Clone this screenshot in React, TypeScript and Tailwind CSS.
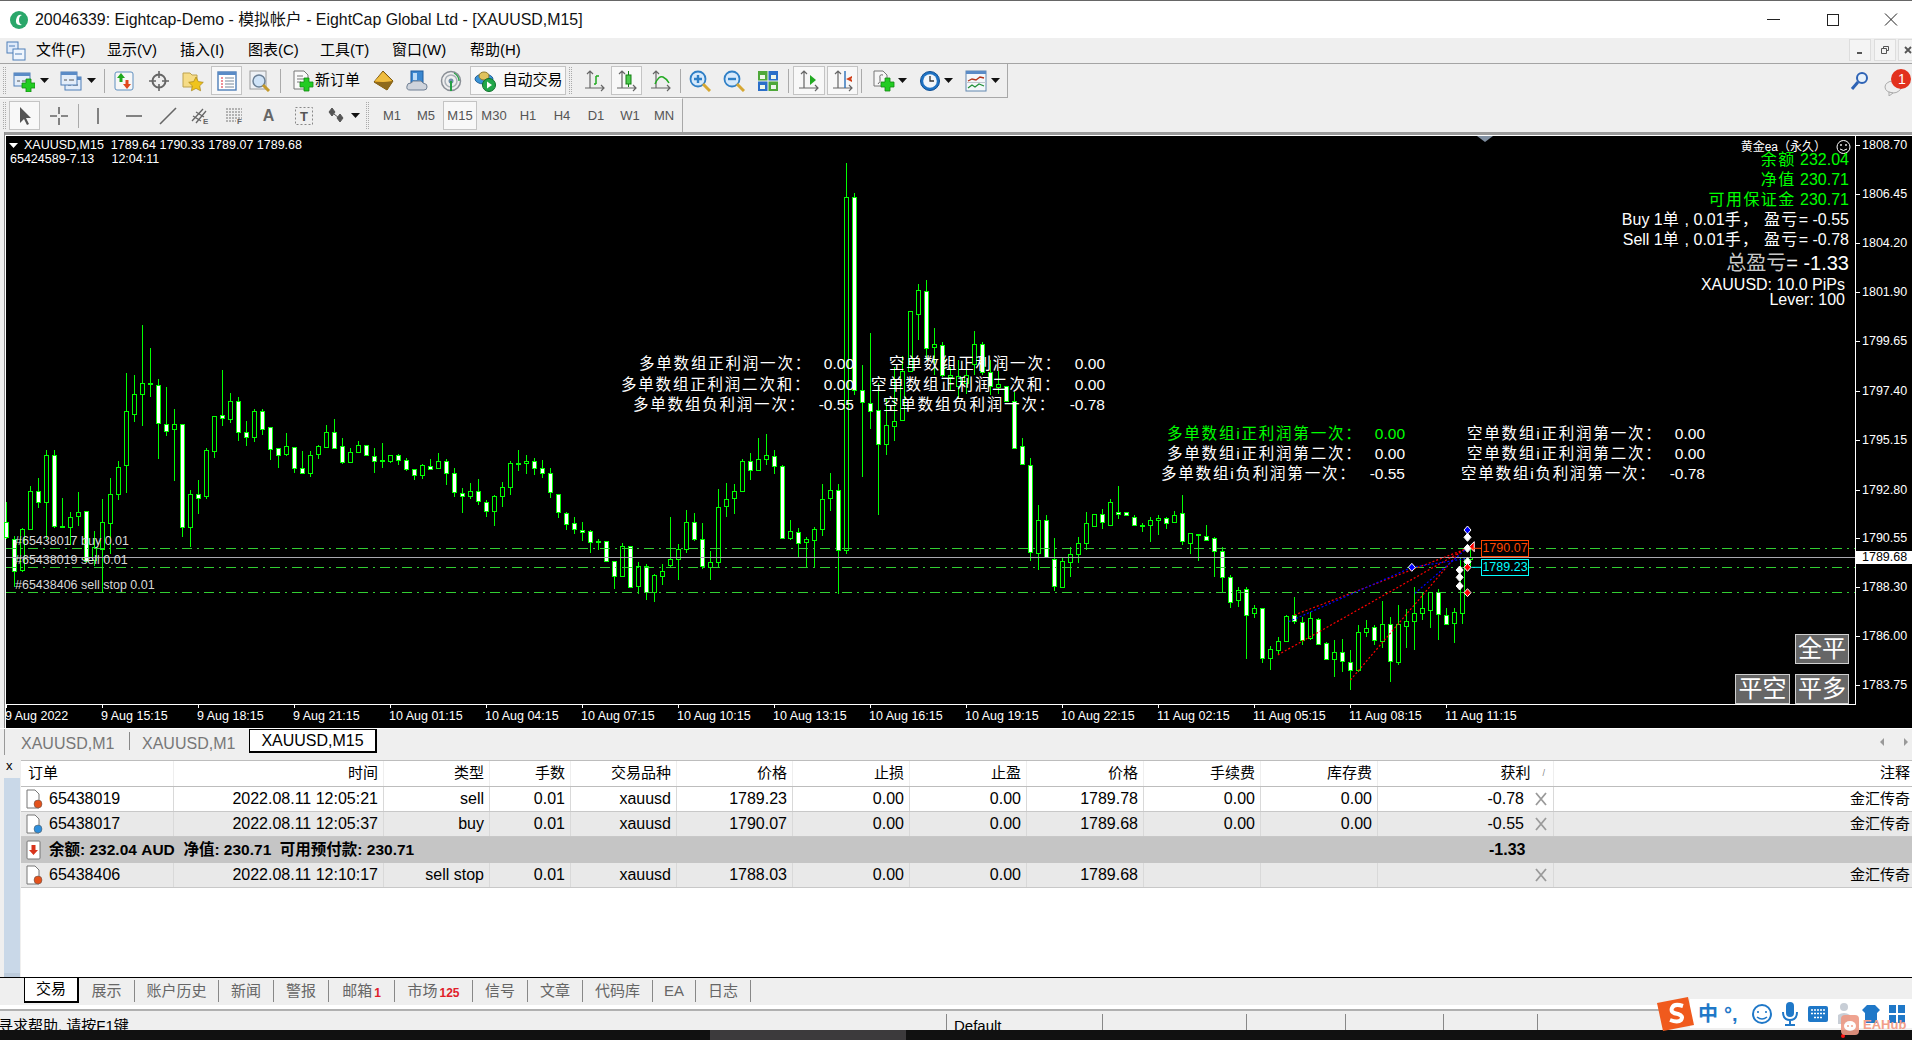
import React from 'react';

const SANS = '"Liberation Sans","Noto Sans CJK SC",sans-serif';

// [high, bodyTop, bodyBottom, low, hollow] in crop units, converted below
const LEFT: number[][] = [
  [972,1025,1065,1070,0],[1062,1068,1152,1195,0],[1040,1042,1150,1155,1],[930,942,1042,1045,1],[910,942,970,988,0],
  [835,848,970,1070,1],[835,850,1035,1040,0],[962,1036,1039,1040,0],[998,1010,1035,1085,1],[946,997,1007,1035,1],
  [995,995,1125,1125,0],[1048,1090,1125,1140,1],[965,1025,1095,1210,1],[910,950,1025,1108,1],[866,880,950,966,1],
  [635,735,877,948,1],[640,691,743,762,1],[510,662,691,773,1],[570,662,664,697,0],[650,667,767,860,0],
  [672,767,785,800,0],[730,769,781,916,1],[769,769,1038,1063,0],[940,950,1035,1090,1],[915,950,961,1003,0],
  [830,837,958,965,1],[748,748,840,856,1],[627,746,753,773,0],[687,707,754,765,1],[698,709,790,812,0],
  [760,790,803,825,0],[730,733,800,814,1],[730,733,780,798,0],[775,775,832,862,0],[832,832,850,882,0],
  [792,827,849,852,1],[828,829,885,895,0],[838,882,894,895,0],[838,848,895,908,1],[822,827,848,860,1],
  [770,790,829,830,1],[755,788,829,830,0],[805,827,868,872,0],[830,842,868,870,1],[813,822,840,843,1],
  [824,824,850,852,0],[832,851,865,895,0],[818,861,863,883,0],[848,848,864,870,1],[847,849,863,875,0],
  [858,863,887,890,0],[885,887,902,915,0],[873,876,903,912,1],[860,877,885,888,0],[845,866,884,886,1],
  [860,866,897,928,0],[882,897,947,958,0],[935,948,957,1000,0],[923,944,958,963,1],[912,944,971,980,0],
  [968,973,996,1010,0],[955,957,995,1034,1],[920,932,955,985,1],[866,871,934,953,1],[836,871,874,890,0],
  [848,866,872,898,1],[858,866,885,902,0],[862,883,897,910,0],[883,897,947,962,0],[950,952,1000,1013,0],
  [998,1000,1028,1045,0],[1010,1028,1044,1055,0],[1024,1044,1049,1075,0],[1045,1049,1078,1105,0],[1070,1074,1077,1098,0],
  [1075,1075,1127,1130,0],[1125,1127,1167,1200,0],[1078,1086,1165,1165,1],[1086,1086,1193,1197,0],[1128,1140,1192,1213,1],
  [1135,1140,1208,1228,0],[1160,1163,1208,1233,1],[1133,1153,1165,1188,1],[1010,1120,1136,1145,1],[1082,1095,1120,1175,1],
  [993,1025,1095,1105,1],[1002,1025,1070,1075,0],[1027,1070,1140,1148,0],[1100,1128,1140,1175,1],[937,984,1128,1145,1],
  [923,963,982,1010,1],[925,944,963,1003,1],[860,866,945,945,1],[845,866,890,915,0],[805,860,890,890,1],
  [795,849,859,875,1],[835,851,877,898,0],[876,877,1065,1068,0],[1020,1047,1065,1072,1],[1040,1050,1078,1117,0],
  [1063,1070,1078,1143,1],[1037,1042,1070,1143,1],[925,963,1042,1060,1],[897,940,961,995,1],[925,940,1097,1212,0],
  [85,176,1098,1108,1],[165,176,680,693,0],[615,680,712,908,0],[530,713,733,780,0],[660,731,820,1005,0],
  [700,770,820,848,1],[620,760,772,813,1],[590,630,757,757,1],[472,474,630,630,1],[403,417,480,550,1],
  [392,420,570,600,0],[518,558,566,640,1],[555,561,640,645,0],[620,640,645,680,1],[600,643,670,700,1],
  [620,640,660,690,1],[525,558,610,640,1],[553,560,633,640,0],[600,633,670,693,0],[630,665,672,690,1],
  [668,668,708,712,0],[685,708,830,833,0],[805,827,875,875,0],[857,875,1103,1125,0],[980,1018,1103,1150,1],
  [1007,1018,1115,1118,0],[1065,1122,1192,1205,0],[1115,1127,1194,1195,1],[1090,1108,1130,1167,1],[1063,1080,1110,1132,1],
  [997,1028,1080,1097,1],[1003,1003,1035,1037,1],[990,1003,1025,1043,0],[965,972,1033,1035,1],[930,999,1003,1017,0],
  [997,999,1008,1008,0],[1005,1010,1030,1035,0],[1027,1032,1033,1050,0],[1012,1020,1032,1077,1],[1005,1015,1020,1058,1],
  [1012,1013,1025,1043,0],[995,1005,1023,1025,1],[955,1002,1075,1085,0],[1052,1052,1078,1108,1],[1055,1056,1057,1125,0],
  [1032,1060,1070,1075,0],[1063,1067,1100,1167,0],[1090,1100,1167,1208,0],
];
const RIGHT: number[][] = [
  [285,290,365,385,0],[322,330,360,380,1],[322,327,405,537,0],[375,385,400,415,1],[385,385,535,550,0],
  [497,508,535,570,1],[470,484,512,525,1],[405,407,482,482,1],[350,406,424,432,0],[410,425,478,495,0],
  [395,415,474,480,1],[415,416,490,495,0],[485,488,535,538,0],[480,515,535,590,1],[478,515,543,575,0],
  [510,545,570,630,0],[435,455,570,575,1],[420,443,455,470,1],[435,440,480,495,0],[363,433,485,505,1],
  [410,433,545,605,0],[375,433,548,555,1],[388,422,436,505,1],[320,400,425,510,1],[337,385,400,420,1],
  [337,337,392,445,1],[328,337,403,480,0],[385,404,430,433,0],[385,397,430,490,1],[230,230,397,432,1],
  [205,232,238,262,1],
];
const candles = [
  ...LEFT.map((c) => [130 + c[0] / 2.613, 130 + c[1] / 2.613, 130 + c[2] / 2.613, 130 + c[3] / 2.613, c[4]]),
  ...RIGHT.map((c) => [480 + c[0] / 3, 480 + c[1] / 3, 480 + c[2] / 3, 480 + c[3] / 3, c[4]]),
];

const px = (z: number) => 1230 + z / 2.299;
const py = (z: number) => 480 + z / 3;

const Chart = () => (
  <svg className="absolute inset-0" width={1912} height={596} viewBox="0 132 1912 596">
    {candles.map((c, i) => {
      const x = 6 + i * 8 + 0.5;
      const top = Math.round(c[1]) + 0.5;
      const h = Math.max(1, Math.round(c[2] - c[1]));
      return (
        <g key={i} stroke="#00ff00" strokeWidth={1} shapeRendering="crispEdges">
          <line x1={x} x2={x} y1={Math.round(c[0])} y2={Math.round(c[3])} />
          <rect x={x - 2} y={top} width={4} height={h} fill={c[4] ? '#000' : '#fff'} />
        </g>
      );
    })}
    <g stroke="#32cd32" strokeWidth={1} strokeDasharray="10 5 2 5" shapeRendering="crispEdges">
      <line x1={6} x2={1855} y1={548.5} y2={548.5} />
      <line x1={6} x2={1855} y1={567.5} y2={567.5} />
      <line x1={6} x2={1855} y1={592.5} y2={592.5} />
    </g>
    <line x1={6} x2={1855} y1={557.5} y2={557.5} stroke="#a9a9b0" shapeRendering="crispEdges" />
    <g strokeWidth={1.2} strokeDasharray="2 2" fill="none">
      <line x1={px(148)} y1={py(405)} x2={px(540)} y2={py(208)} stroke="#ff0000" />
      <line x1={px(110)} y1={py(525)} x2={px(545)} y2={py(205)} stroke="#ff0000" />
      <line x1={px(277)} y1={py(600)} x2={px(528)} y2={py(215)} stroke="#ff0000" />
      <line x1={px(135)} y1={py(425)} x2={px(418)} y2={py(262)} stroke="#0000ff" />
      <line x1={px(425)} y1={py(340)} x2={px(545)} y2={py(205)} stroke="#0000ff" />
      <line x1={px(418)} y1={py(262)} x2={px(545)} y2={py(235)} stroke="#0000ff" />
    </g>
    {[[418, 262, '#0000ff'], [546, 150, '#0000ff'], [546, 172, '#fff'], [546, 205, '#fff'], [528, 270, '#fff'], [528, 292, '#fff'], [528, 318, '#fff'], [546, 245, '#fff'], [546, 262, '#ff0000'], [546, 338, '#ff0000']].map((m, i) => (
      <path key={i} d={`M${px(m[0] as number) - 3.5} ${py(m[1] as number)}l3.5 -4 3.5 4 -3.5 4z`} fill={m[2] as string} stroke="#fff" strokeWidth={1} />
    ))}
    <path d={`M${px(550)} ${py(200)}l5 -5v10z`} fill="#ff0000" stroke="#fff" />
    <line x1={px(555)} x2={px(578)} y1={py(205)} y2={py(205)} stroke="#ff4500" />
    <line x1={px(555)} x2={px(578)} y1={py(262)} y2={py(262)} stroke="#00ffff" />
    <g stroke="#fff" shapeRendering="crispEdges">
      {[145, 194, 243, 292, 341, 391, 440, 490, 538, 587, 636, 685].map((y) => (
        <line key={y} x1={1856} x2={1860} y1={y + 0.5} y2={y + 0.5} />
      ))}
      {Array.from({ length: 16 }).map((_, i) => (
        <line key={i} x1={6.5 + i * 96} x2={6.5 + i * 96} y1={704} y2={708} />
      ))}
      <line x1={6} x2={1855} y1={704.5} y2={704.5} />
      <line x1={1855.5} x2={1855.5} y1={136} y2={705} />
    </g>
    <path d="M1477 136h16l-8 6z" fill="#7f8ea0" />
    <path d="M9 143h9l-4.5 5z" fill="#fff" />
    <g fill="none" stroke="#fff">
      <circle cx={1843.5} cy={147} r={6.5} />
      <circle cx={1841} cy={145} r={0.6} />
      <circle cx={1846} cy={145} r={0.6} />
      <path d="M1840 149q3.5 3 7 0" />
    </g>
  </svg>
);

const PRICES = [
  ['1808.70', 'top-[5px]'], ['1806.45', 'top-[54px]'], ['1804.20', 'top-[103px]'], ['1801.90', 'top-[152px]'],
  ['1799.65', 'top-[201px]'], ['1797.40', 'top-[251px]'], ['1795.15', 'top-[300px]'], ['1792.80', 'top-[350px]'],
  ['1790.55', 'top-[398px]'], ['1788.30', 'top-[447px]'], ['1786.00', 'top-[496px]'], ['1783.75', 'top-[545px]'],
];
const DATES = [
  ['9 Aug 2022', 'left-[5px]'], ['9 Aug 15:15', 'left-[101px]'], ['9 Aug 18:15', 'left-[197px]'], ['9 Aug 21:15', 'left-[293px]'],
  ['10 Aug 01:15', 'left-[389px]'], ['10 Aug 04:15', 'left-[485px]'], ['10 Aug 07:15', 'left-[581px]'], ['10 Aug 10:15', 'left-[677px]'],
  ['10 Aug 13:15', 'left-[773px]'], ['10 Aug 16:15', 'left-[869px]'], ['10 Aug 19:15', 'left-[965px]'], ['10 Aug 22:15', 'left-[1061px]'],
  ['11 Aug 02:15', 'left-[1157px]'], ['11 Aug 05:15', 'left-[1253px]'], ['11 Aug 08:15', 'left-[1349px]'], ['11 Aug 11:15', 'left-[1445px]'],
];
const STATS = [
  ['多单数组正利润一次：', '0.00', 'left-[639px] w-[215px] top-[222px]', 'text-white'],
  ['多单数组正利润二次和：', '0.00', 'left-[621px] w-[233px] top-[243px]', 'text-white'],
  ['多单数组负利润一次：', '-0.55', 'left-[633px] w-[221px] top-[263px]', 'text-white'],
  ['空单数组正利润一次：', '0.00', 'left-[889px] w-[216px] top-[222px]', 'text-white'],
  ['空单数组正利润二次和：', '0.00', 'left-[871px] w-[234px] top-[243px]', 'text-white'],
  ['空单数组负利润一次：', '-0.78', 'left-[883px] w-[222px] top-[263px]', 'text-white'],
  ['多单数组i正利润第一次：', '0.00', 'left-[1167px] w-[238px] top-[292px]', 'text-[#00ff00]'],
  ['多单数组i正利润第二次：', '0.00', 'left-[1167px] w-[238px] top-[312px]', 'text-white'],
  ['多单数组i负利润第一次：', '-0.55', 'left-[1161px] w-[244px] top-[332px]', 'text-white'],
  ['空单数组i正利润第一次：', '0.00', 'left-[1467px] w-[238px] top-[292px]', 'text-white'],
  ['空单数组i正利润第二次：', '0.00', 'left-[1467px] w-[238px] top-[312px]', 'text-white'],
  ['空单数组i负利润第一次：', '-0.78', 'left-[1461px] w-[244px] top-[332px]', 'text-white'],
];

const C = ({ children }: { children: React.ReactNode }) => <span className="tracking-[1.4px]">{children}</span>;

const ChartPanel = () => (
  <div className="relative h-[596px] w-full shrink-0 bg-black text-white overflow-hidden">
    <div className="absolute left-0 right-0 top-0 h-[3px] bg-[#9a9a9a]" />
    <div className="absolute left-0 right-0 top-[3px] h-px bg-white" />
    <div className="absolute left-0 top-0 h-full w-[4px] bg-[#efefef]" />
    <div className="absolute left-[4px] top-0 h-full w-px bg-[#8a8a8a]" />
    <div className="absolute left-[5px] top-[3px] h-full w-px bg-white" />
    <Chart />
    <div className="absolute left-[24px] top-[5px] h-[16px] leading-[16px] text-[12.5px] whitespace-pre">XAUUSD,M15  1789.64 1790.33 1789.07 1789.68</div>
    <div className="absolute left-[10px] top-[19px] h-[16px] leading-[16px] text-[12.5px] whitespace-pre">65424589-7.13     12:04:11</div>
    <div className="absolute left-[15px] top-[401px] h-[16px] leading-[16px] text-[12.5px] text-[#d8d8d8]">#65438017 buy 0.01</div>
    <div className="absolute left-[15px] top-[420px] h-[16px] leading-[16px] text-[12.5px] text-[#d8d8d8]">#65438019 sell 0.01</div>
    <div className="absolute left-[15px] top-[445px] h-[16px] leading-[16px] text-[12.5px] text-[#d8d8d8]">#65438406 sell stop 0.01</div>

    {STATS.map((s) => (
      <div key={s[0]} className={`absolute h-[20px] leading-[20px] text-[15.5px] flex justify-between whitespace-pre ${s[2]} ${s[3]}`}>
        <span className="tracking-[1.8px]">{s[0]}</span>
        <span>{s[1]}</span>
      </div>
    ))}

    <div className="absolute right-[86px] top-[5px] h-[20px] leading-[20px] text-[12px]">黄金ea（永久）</div>
    <div className="absolute right-[63px] top-[18px] h-[20px] leading-[20px] text-[16px] text-[#00ff00] whitespace-pre"><C>余额</C> 232.04</div>
    <div className="absolute right-[63px] top-[38px] h-[20px] leading-[20px] text-[16px] text-[#00ff00] whitespace-pre"><C>净值</C> 230.71</div>
    <div className="absolute right-[63px] top-[58px] h-[20px] leading-[20px] text-[16px] text-[#00ff00] whitespace-pre"><C>可用保证金</C> 230.71</div>
    <div className="absolute right-[63px] top-[78px] h-[20px] leading-[20px] text-[16px] whitespace-pre">Buy 1<C>单</C> , 0.01<C>手，</C> <C>盈亏</C>= -0.55</div>
    <div className="absolute right-[63px] top-[98px] h-[20px] leading-[20px] text-[16px] whitespace-pre">Sell 1<C>单</C> , 0.01<C>手，</C> <C>盈亏</C>= -0.78</div>
    <div className="absolute right-[63px] top-[120px] h-[22px] leading-[22px] text-[20px] whitespace-pre"><span className="text-[#c8c8c8]">总盈亏</span>= -1.33</div>
    <div className="absolute right-[67px] top-[143px] h-[20px] leading-[20px] text-[16px] whitespace-pre">XAUUSD: 10.0 PiPs</div>
    <div className="absolute right-[67px] top-[158px] h-[20px] leading-[20px] text-[16px] whitespace-pre">Lever: 100</div>

    {PRICES.map((p) => (
      <div key={p[0]} className={`absolute left-[1862px] h-[16px] leading-[16px] text-[12.5px] ${p[1]}`}>{p[0]}</div>
    ))}
    <div className="absolute left-[1856px] top-[419px] h-[13px] w-[56px] bg-white text-black text-[12.5px] leading-[13px] pl-[6px]">1789.68</div>
    {DATES.map((d) => (
      <div key={d[0]} className={`absolute top-[576px] h-[16px] leading-[16px] text-[12.5px] whitespace-pre ${d[1]}`}>{d[0]}</div>
    ))}

    <div className="absolute left-[1481px] top-[408px] h-[17px] w-[48px] border border-[#ff4500] text-[#ff4500] bg-black text-[12.5px] leading-[15px] text-center">1790.07</div>
    <div className="absolute left-[1481px] top-[427px] h-[17px] w-[48px] border border-[#00ffff] text-[#00ffff] bg-black text-[12.5px] leading-[15px] text-center">1789.23</div>

    <div className="absolute left-[1795px] top-[502px] h-[30px] w-[54px] bg-[#666] border border-[#d0d0d0] text-[24px] leading-[27px] text-center">全平</div>
    <div className="absolute left-[1735px] top-[542px] h-[30px] w-[55px] bg-[#666] border border-[#d0d0d0] text-[24px] leading-[27px] text-center">平空</div>
    <div className="absolute left-[1795px] top-[542px] h-[30px] w-[54px] bg-[#666] border border-[#d0d0d0] text-[24px] leading-[27px] text-center">平多</div>
  </div>
);

/* toolbar icons */
const S = ({ children, w = 22 }: { children: React.ReactNode; w?: number }) => (
  <svg width={w} height={22} viewBox={`0 0 ${w} 22`} className="block shrink-0">{children}</svg>
);
const PlusMark = ({ x, y }: { x: number; y: number }) => (
  <path d={`M${x + 4} ${y}h5v4h4v5h-4v4h-5v-4h-4v-5h4z`} fill="#22cc22" stroke="#118811" strokeWidth={0.8} />
);
const Win = ({ x = 1, y = 3 }: { x?: number; y?: number }) => (
  <g>
    <rect x={x} y={y} width={16} height={13} fill="#e3edf9" stroke="#4f7fb8" />
    <rect x={x} y={y} width={16} height={3} fill="#5a8bc6" />
    <path d={`M${x + 3} ${y + 8}h3m2 0h5`} stroke="#555" />
  </g>
);
const NewChart = () => <S><Win /><PlusMark x={9} y={9} /></S>;
const Profiles = () => <S><Win x={5} y={7} /><Win x={1} y={2} /></S>;
const Market = () => (
  <S>
    <rect x={2} y={2} width={18} height={18} rx={2} fill="#f7f7f7" stroke="#5f8fc0" />
    <path d="M8 3l4 5H9.5v4h-3V8H4z" fill="#1fa81f" />
    <path d="M14 19l4-5h-2.500v-4h-3v4H10z" fill="#e0481c" />
  </S>
);
const Cross = () => (
  <S>
    <circle cx={11} cy={11} r={6.5} fill="none" stroke="#666" strokeWidth={2} />
    <path d="M11 1v7M11 14v7M1 11h7M14 11h7" stroke="#666" strokeWidth={1.6} />
  </S>
);
const Folder = () => (
  <S>
    <path d="M1 3h7l2 2h5v12H1z" fill="#f6dc87" stroke="#bda24e" />
    <path d="M14 7l2.300 4.600 5 .7-3.600 3.500.9 5-4.600-2.400-4.600 2.400.9-5-3.600-3.500 5-.7z" fill="#f0c41b" stroke="#a8841a" strokeWidth={0.7} />
  </S>
);
const Terminal = () => (
  <S>
    <rect x={2} y={2} width={18} height={18} fill="#fff" stroke="#4f7fb8" strokeWidth={1.4} />
    <rect x={2} y={2} width={18} height={3} fill="#5a8bc6" />
    <path d="M5 8h2M5 11h2M5 14h2M5 17h2" stroke="#d23" strokeWidth={1.2} />
    <path d="M9 8h9M9 11h9M9 14h9M9 17h9" stroke="#789" />
  </S>
);
const Tester = () => (
  <S w={24}>
    <rect x={1} y={1} width={16} height={18} fill="#eef1f5" stroke="#9a9a9a" />
    <circle cx={10} cy={11} r={6} fill="#cfe3f7" stroke="#6a7f95" strokeWidth={1.5} />
    <path d="M14 15l6 6" stroke="#c49a2c" strokeWidth={3} />
  </S>
);
const NewOrder = () => (
  <S>
    <path d="M2 1h10l4 4v14H2z" fill="#fafafa" stroke="#777" />
    <path d="M5 6h6M5 9h8M5 12h4" stroke="#777" />
    <PlusMark x={8} y={8} />
  </S>
);
const Gold = () => (
  <S>
    <path d="M10 1l10 10-6 9L1 12z" fill="#d89b1d" stroke="#7c5a13" />
    <path d="M1 12l13 8 6-9-11 1z" fill="#8f6a1b" />
    <path d="M10 2l9 9-9 1-8-1z" fill="#efbd40" />
  </S>
);
const CloudI = () => (
  <S>
    <rect x={5} y={1} width={12} height={12} fill="#3a87d0" stroke="#1e5d9e" />
    <rect x={7} y={3} width={4} height={7} fill="#bcdcf7" />
    <path d="M4 20q-4 0-3-4 0-3 4-3 2-3 6-2 5-1 6 2 5 1 4 4 0 3-3 3z" fill="#cfd4dc" stroke="#6f7f93" />
  </S>
);
const Antenna = () => (
  <S>
    <circle cx={11} cy={11} r={9.500} fill="none" stroke="#8a8f96" strokeWidth={1.5} />
    <circle cx={11} cy={11} r={6} fill="none" stroke="#aab1b8" strokeWidth={1.5} />
    <circle cx={11} cy={11} r={2.500} fill="#6f8fa6" />
    <path d="M11 11v10" stroke="#25a045" strokeWidth={2} />
    <path d="M14 3q5 3 5 8" fill="none" stroke="#25a045" strokeWidth={1.3} />
  </S>
);
const Auto = () => (
  <S w={24}>
    <ellipse cx={10} cy={9} rx={9} ry={5} fill="#3b93d6" stroke="#1d5f98" />
    <ellipse cx={10} cy={6} rx={5} ry={4} fill="#e0c25c" stroke="#8f7a2e" />
    <circle cx={15} cy={15} r={6.500} fill="#22a84a" stroke="#0e6f2a" />
    <path d="M13 11.500l5 3.500-5 3.500z" fill="#fff" />
  </S>
);
const Axes = () => (
  <path d="M6 1v17M3 4l3-3 3 3M1 18h19M17 15l3 3-3 3" fill="none" stroke="#666" strokeWidth={1.2} />
);
const Bars = () => <S><Axes /><path d="M12 14V6M12 6h3M12 14h-2" stroke="#22aa22" strokeWidth={1.5} /></S>;
const Candles = () => (
  <S><Axes /><rect x={10} y={5} width={5} height={9} fill="#4ecb4e" stroke="#137f13" /><path d="M12.500 1v4M12.500 14v3" stroke="#137f13" /></S>
);
const LineI = () => <S><Axes /><path d="M5 14q4-9 8-7t6 6" fill="none" stroke="#22aa22" strokeWidth={1.5} /></S>;
const Zoom = ({ plus }: { plus?: boolean }) => (
  <S>
    <circle cx={9} cy={9} r={7.500} fill="#d6e9fb" stroke="#2f7fc6" strokeWidth={1.8} />
    <path d={plus ? 'M5 9h8M9 5v8' : 'M5 9h8'} stroke="#2f7fc6" strokeWidth={2.400} />
    <path d="M14 14l7 7" stroke="#d6a733" strokeWidth={3} />
  </S>
);
const Tile = () => (
  <S>
    <rect x={1} y={1} width={9.500} height={9.500} fill="#4fa83a" />
    <rect x={11.500} y={1} width={9.500} height={9.500} fill="#2b6fc9" />
    <rect x={1} y={11.500} width={9.500} height={9.500} fill="#2b6fc9" />
    <rect x={11.500} y={11.500} width={9.500} height={9.500} fill="#4fa83a" />
    <path d="M3 5h5v4H3zM14 5h5v4h-5zM3 15h5v4H3zM14 15h5v4h-5z" fill="#eef6ea" />
  </S>
);
const Scroll = () => <S><Axes /><path d="M12 5l6 5-6 5z" fill="#22aa22" /></S>;
const Shift = () => <S><Axes /><path d="M13 1v17" stroke="#2a6fb8" strokeWidth={1.4} /><path d="M14 9l6-3v2.500h-1v1h1v2.500z" fill="#d2401a" /></S>;
const Indicator = () => (
  <S>
    <path d="M1 1h9l4 4v11H1z" fill="#f6f6f6" stroke="#777" />
    <path d="M5 14q3-2 2-6t3-3" fill="none" stroke="#666" />
    <PlusMark x={8} y={8} />
  </S>
);
const Clock = () => (
  <S>
    <circle cx={11} cy={11} r={9.500} fill="#1f73c4" stroke="#0f4f94" />
    <circle cx={11} cy={11} r={6.800} fill="#f2f6fa" />
    <path d="M11 6v5h4" fill="none" stroke="#333" strokeWidth={1.3} />
  </S>
);
const Template = () => (
  <S>
    <rect x={1} y={1} width={20} height={20} fill="#f4f7fa" stroke="#6288b0" />
    <rect x={1} y={1} width={20} height={3} fill="#5a8bc6" />
    <path d="M3 11l4-2 4 1 4-3 4 1" fill="none" stroke="#b3341a" strokeWidth={1.300} />
    <path d="M3 18l4-3 3 2 4-3 5 2" fill="none" stroke="#23923a" strokeWidth={1.300} />
    <path d="M1 12.500h20" stroke="#c0c8d0" />
  </S>
);
const Arrow = () => <svg width={9} height={5} viewBox="0 0 9 5" className="block shrink-0"><path d="M0 0h9L4.500 5z" fill="#111" /></svg>;
const Grip = () => <div className="w-[3px] h-[27px] shrink-0 border-x border-dotted border-[#aaa]" />;
const Sep = () => <div className="w-px h-[24px] shrink-0 bg-[#aaa]" />;
const PRESSED = 'flex items-center justify-center shrink-0 h-[29px] border border-[#c4c4c4] bg-[#f8f8f8]';
const SLOT = 'flex items-center justify-center shrink-0 h-[29px]';

const ToolbarOne = () => (
  <div className="h-[35px] flex items-center w-[1912px] border-t border-[#a4a4a4] shrink-0 relative">
    <div className="flex items-center w-[1008px] h-full border-r border-b border-[#a8a8a8]">
      <div className="w-[3px] ml-[3px]"><Grip /></div>
      <div className={`${SLOT} w-[23px] ml-[6px]`}><NewChart /></div>
      <div className={`${SLOT} w-[18px]`}><Arrow /></div>
      <div className={`${SLOT} w-[22px] ml-[7px]`}><Profiles /></div>
      <div className={`${SLOT} w-[18px]`}><Arrow /></div>
      <div className="ml-[4px]"><Sep /></div>
      <div className={`${SLOT} w-[32px] ml-[3px]`}><Market /></div>
      <div className={`${SLOT} w-[38px]`}><Cross /></div>
      <div className={`${SLOT} w-[30px]`}><Folder /></div>
      <div className={`${PRESSED} w-[31px] ml-[3px]`}><Terminal /></div>
      <div className={`${SLOT} w-[38px]`}><Tester /></div>
      <Sep />
      <div className={`${SLOT} ml-[11px] gap-[1px]`}><NewOrder /><span className="text-[15px] text-black">新订单</span></div>
      <div className={`${SLOT} w-[33px] ml-[7px]`}><Gold /></div>
      <div className={`${SLOT} w-[34px]`}><CloudI /></div>
      <div className={`${SLOT} w-[34px]`}><Antenna /></div>
      <div className={`${PRESSED} w-[96px] ml-[2px] gap-[5px]`}><Auto /><span className="text-[15px] text-black">自动交易</span></div>
      <div className="ml-[3px]"><Grip /></div>
      <div className={`${SLOT} w-[33px] ml-[6px]`}><Bars /></div>
      <div className={`${PRESSED} w-[31px]`}><Candles /></div>
      <div className={`${SLOT} w-[38px]`}><LineI /></div>
      <Sep />
      <div className={`${SLOT} w-[38px]`}><Zoom plus /></div>
      <div className={`${SLOT} w-[30px]`}><Zoom /></div>
      <div className={`${SLOT} w-[38px]`}><Tile /></div>
      <div className="ml-[1px]"><Sep /></div>
      <div className={`${PRESSED} w-[32px] ml-[4px]`}><Scroll /></div>
      <div className={`${PRESSED} w-[31px] ml-[2px]`}><Shift /></div>
      <div className="ml-[3px]"><Sep /></div>
      <div className={`${SLOT} w-[29px] ml-[7px]`}><Indicator /></div>
      <div className={`${SLOT} w-[8px]`}><Arrow /></div>
      <div className={`${SLOT} w-[22px] ml-[13px]`}><Clock /></div>
      <div className={`${SLOT} w-[14px]`}><Arrow /></div>
      <div className={`${SLOT} w-[22px] ml-[10px]`}><Template /></div>
      <div className={`${SLOT} w-[16px]`}><Arrow /></div>
    </div>
    <svg width={20} height={20} viewBox="0 0 20 20" className="absolute left-[1850px] top-[7px]">
      <circle cx={12} cy={7} r={5} fill="#e8f2fb" stroke="#2e63b5" strokeWidth={2} />
      <path d="M8 11l-6 7" stroke="#2e63b5" strokeWidth={3} />
    </svg>
    <svg width={28} height={28} viewBox="0 0 28 28" className="absolute left-[1884px] top-[4px]">
      <ellipse cx={9} cy={19} rx={8} ry={6} fill="#eee" stroke="#aaa" />
      <path d="M5 24v4l4-3z" fill="#eee" stroke="#aaa" />
      <circle cx={17} cy={11} r={10} fill="#e2311d" />
    </svg>
    <span className="absolute left-[1898px] top-[7px] text-[14px] leading-[16px] text-white">1</span>
  </div>
);

const Mini = ({ glyph }: { glyph: 'cursor' | 'cross' | 'v' | 'h' | 't' | 'fib' | 'grid' | 'box' | 'arrows' }) => (
  <svg width={20} height={20} viewBox="0 0 20 20" className="block shrink-0">
    {glyph === 'cursor' && <path d="M5 1v16l4-4 3 6 2-1-3-6h5z" fill="#555" />}
    {glyph === 'cross' && <path d="M10 1v7M10 12v7M1 10h7M12 10h7" stroke="#666" strokeWidth={1.6} />}
    {glyph === 'v' && <path d="M10 2v16" stroke="#666" strokeWidth={1.6} />}
    {glyph === 'h' && <path d="M2 10h16" stroke="#666" strokeWidth={1.6} />}
    {glyph === 't' && <path d="M2 18L18 2" stroke="#666" strokeWidth={1.6} />}
    {glyph === 'fib' && <g><path d="M1 15L12 3M5 17L15 5M2 10l8 5M5 6l8 5" stroke="#666" strokeWidth={1.3} /><text x={12} y={18} fontSize={8} fill="#666" fontWeight="bold">E</text></g>}
    {glyph === 'grid' && <g><path d="M1 3h16M1 6h16M1 9h16M1 12h16M1 15h10" stroke="#777" strokeDasharray="2 1" /><text x={12} y={18} fontSize={8} fill="#666" fontWeight="bold">F</text></g>}
    {glyph === 'box' && <g><rect x={1.500} y={1.500} width={17} height={17} fill="none" stroke="#888" strokeDasharray="2 2" /><text x={10} y={15} fontSize={13} textAnchor="middle" fill="#555" fontWeight="bold">T</text></g>}
    {glyph === 'arrows' && <path d="M6 2l3 4-3 4-3-4zM14 8l3 4-3 4-3-4zM8 8l5 4" fill="#555" stroke="#555" />}
  </svg>
);

const TF = ['M1', 'M5', 'M15', 'M30', 'H1', 'H4', 'D1', 'W1', 'MN'];

const ToolbarTwo = () => (
  <div className="h-[34px] flex items-center w-[683px] border-r border-[#a8a8a8] border-t border-t-white shrink-0">
    <div className="w-[3px] ml-[3px]"><Grip /></div>
    <div className={`${PRESSED} w-[31px] ml-[3px]`}><Mini glyph="cursor" /></div>
    <div className={`${SLOT} w-[38px]`}><Mini glyph="cross" /></div>
    <Sep />
    <div className={`${SLOT} w-[38px]`}><Mini glyph="v" /></div>
    <div className={`${SLOT} w-[34px]`}><Mini glyph="h" /></div>
    <div className={`${SLOT} w-[33px]`}><Mini glyph="t" /></div>
    <div className={`${SLOT} w-[33px]`}><Mini glyph="fib" /></div>
    <div className={`${SLOT} w-[35px]`}><Mini glyph="grid" /></div>
    <div className={`${SLOT} w-[33px] text-[16px] font-bold text-[#666]`}>A</div>
    <div className={`${SLOT} w-[37px]`}><Mini glyph="box" /></div>
    <div className={`${SLOT} w-[28px]`}><Mini glyph="arrows" /></div>
    <div className={`${SLOT} w-[10px]`}><Arrow /></div>
    <div className="ml-[6px]"><Grip /></div>
    <div className="flex items-center ml-[6px]">
      {TF.map((t) => (
        <div key={t} className={`${t === 'M15' ? PRESSED : SLOT} w-[34px] text-[13px] text-[#555]`}>{t}</div>
      ))}
    </div>
  </div>
);

const MENU: [string, string][] = [
  ['文件(F)', 'w-[71px]'], ['显示(V)', 'w-[73px]'], ['插入(I)', 'w-[68px]'], ['图表(C)', 'w-[72px]'],
  ['工具(T)', 'w-[72px]'], ['窗口(W)', 'w-[78px]'], ['帮助(H)', 'w-[70px]'],
];

const COLS = 'grid grid-cols-[153px_210px_106px_81px_106px_116px_117px_117px_117px_117px_117px_176px_358px]';
const HEAD = ['时间', '类型', '手数', '交易品种', '价格', '止损', '止盈', '价格', '手续费', '库存费'];

const Doc = ({ dot }: { dot: string }) => (
  <svg width={18} height={20} viewBox="0 0 18 20" className="block shrink-0">
    <path d="M2 1h8l4 4v14H2z" fill="#fff" stroke="#777" />
    <circle cx={13} cy={15} r={4} fill={dot} stroke="#555" strokeWidth={0.5} />
  </svg>
);
const Xmark = () => (
  <svg width={12} height={14} viewBox="0 0 12 14" className="block">
    <path d="M1 1l10 12M11 1L1 13" stroke="#9a9a9a" strokeWidth={1.8} />
  </svg>
);
const Cell = ({ children, className = '' }: { children?: React.ReactNode; className?: string }) => (
  <div className={`h-full flex items-center justify-end pr-[5px] border-r border-[#d9d9d9] whitespace-pre ${className}`}>{children}</div>
);

type Row = { id: string; time: string; type: string; price: string; cur: string; dot: string; bg: string; fee: boolean; profit: string };
const Order = ({ r }: { r: Row }) => (
  <div className={`${COLS} h-[25px] border-b border-[#c8c8c8] ${r.bg}`}>
    <div className="h-full flex items-center gap-[6px] pl-[4px] border-r border-[#d9d9d9]"><Doc dot={r.dot} />{r.id}</div>
    <Cell>{r.time}</Cell>
    <Cell>{r.type}</Cell>
    <Cell>0.01</Cell>
    <Cell>xauusd</Cell>
    <Cell>{r.price}</Cell>
    <Cell>0.00</Cell>
    <Cell>0.00</Cell>
    <Cell>{r.cur}</Cell>
    <Cell>{r.fee ? '0.00' : ''}</Cell>
    <Cell>{r.fee ? '0.00' : ''}</Cell>
    <Cell className="pr-[6px]">
      <span className="mr-[11px]">{r.profit}</span>
      <Xmark />
    </Cell>
    <div className="h-full flex items-center justify-end pr-[2px] text-[15px]">金汇传奇</div>
  </div>
);

const TABS: { t: string; n?: string; w: string }[] = [
  { t: '展示', w: 'w-[56px]' }, { t: '账户历史', w: 'w-[84px]' }, { t: '新闻', w: 'w-[55px]' }, { t: '警报', w: 'w-[55px]' },
  { t: '邮箱', n: '1', w: 'w-[66px]' }, { t: '市场', n: '125', w: 'w-[78px]' }, { t: '信号', w: 'w-[55px]' }, { t: '文章', w: 'w-[55px]' },
  { t: '代码库', w: 'w-[70px]' }, { t: 'EA', w: 'w-[43px]' }, { t: '日志', w: 'w-[55px]' },
];

const Terminal2 = () => (
  <div className="flex h-[250px] bg-white shrink-0">
    <div className="w-[21px] shrink-0 bg-[#efefef] flex flex-col">
      <div className="h-[23px] text-[13px] leading-[22px] pl-[6px] text-black">x</div>
      <div className="ml-[4px] w-[16px] flex-1 bg-[#c9d8e8] flex flex-col justify-end">
        <div className="h-[32px] bg-[#bccbdb] flex items-center justify-center">
          <span className="rotate-90 text-[11px] leading-none text-[#222] whitespace-nowrap">终端</span>
        </div>
      </div>
    </div>
    <div className="flex-1 flex flex-col min-w-0 text-[16px] text-black">
      <div className="bg-[#efefef] h-[5px]" />
      <div className={`${COLS} h-[27px] border-y border-[#bdbdbd] text-[15px]`}>
        <div className="h-full flex items-center pl-[7px] border-r border-[#eee]">订单</div>
        {HEAD.map((h, i) => (
          <div key={i} className="h-full flex items-center justify-end pr-[5px] border-r border-[#eee]">{h}</div>
        ))}
        <div className="h-full flex items-center justify-end pr-[8px] border-r border-[#eee]">
          获利<span className="ml-[12px] text-[9px] text-[#888]">/</span>
        </div>
        <div className="h-full flex items-center justify-end pr-[2px]">注释</div>
      </div>
      <Order r={{ id: '65438019', time: '2022.08.11 12:05:21', type: 'sell', price: '1789.23', cur: '1789.78', dot: '#e4521c', bg: 'bg-white', fee: true, profit: '-0.78' }} />
      <Order r={{ id: '65438017', time: '2022.08.11 12:05:37', type: 'buy', price: '1790.07', cur: '1789.68', dot: '#2e8fdc', bg: 'bg-[#e9e9e9]', fee: true, profit: '-0.55' }} />
      <div className="h-[26px] bg-[#c5c5c5] flex items-center font-bold text-[15.5px] relative">
        <svg width={18} height={20} viewBox="0 0 18 20" className="ml-[4px] mr-[6px] block shrink-0">
          <rect x={2} y={1} width={13} height={18} rx={1} fill="#fff" stroke="#777" />
          <path d="M6.500 5h4v5H13l-4.500 5L4 10h2.500z" fill="#d8341c" />
        </svg>
        <span className="whitespace-pre">余额: 232.04 AUD  净值: 230.71  可用预付款: 230.71</span>
        <span className="absolute left-[1468px] text-[16px]">-1.33</span>
      </div>
      <Order r={{ id: '65438406', time: '2022.08.11 12:10:17', type: 'sell stop', price: '1788.03', cur: '1789.68', dot: '#e4521c', bg: 'bg-[#e9e9e9]', fee: false, profit: '' }} />
      <div className="flex-1" />
      <div className="h-[28px] flex shrink-0 bg-[#efefef] border-t border-black -ml-[21px] text-[15px] relative">
        <div className="ml-[24px] w-[55px] h-[26px] -mt-px bg-white border-l border-r-2 border-b-2 border-black border-t flex items-center justify-center text-black">交易</div>
        {TABS.map((t) => (
          <div key={t.t} className={`${t.w} h-[22px] mt-[2px] flex items-center justify-center border-r border-[#888] text-[#666] whitespace-pre`}>
            {t.t}
            {t.n && <span className="text-[#e0202a] text-[12px] font-bold mt-[4px] ml-[2px]">{t.n}</span>}
          </div>
        ))}
      </div>
    </div>
  </div>
);

const STATUS_SEP = ['w-[144px]', 'w-[99px]', 'w-[98px]', 'w-[94px]', 'w-[96px]'];

const MdiBox = ({ children, className }: { children: React.ReactNode; className: string }) => (
  <div className={`absolute top-[1px] w-[22px] h-[22px] border border-[#ddd] bg-[#f4f4f4] flex items-center justify-center ${className}`}>
    <svg width={10} height={10} viewBox="0 0 10 10" className="block">{children}</svg>
  </div>
);

const App = () => (
  <div className="w-[1912px] h-[1040px] overflow-hidden relative bg-[#efefef] flex flex-col" style={{ fontFamily: SANS }}>
    <div className="h-[38px] shrink-0 bg-white border-t border-[#666] flex items-center text-[#111] relative">
      <svg width={20} height={20} viewBox="0 0 20 20" className="ml-[9px] block">
        <circle cx={10} cy={10} r={9} fill="#2aa76a" />
        <path d="M13 5q-5-1-6 5t6 5q-3-1-3-5t3-5z" fill="#fff" />
      </svg>
      <span className="ml-[6px] text-[15.9px]">20046339: Eightcap-Demo - 模拟帐户 - EightCap Global Ltd - [XAUUSD,M15]</span>
      <svg width={140} height={20} viewBox="0 0 140 20" className="absolute left-[1762px] top-[8px]">
        <path d="M5 10.500h13" stroke="#222" />
        <rect x={65.500} y={5.500} width={11} height={11} fill="none" stroke="#222" />
        <path d="M123 4.500l12 12M135 4.500l-12 12" stroke="#222" />
      </svg>
    </div>

    <div className="h-[25px] shrink-0 flex items-center relative">
      <svg width={20} height={20} viewBox="0 0 20 20" className="ml-[6px] mr-[10px] block">
        <rect x={1} y={1} width={11} height={11} fill="#dfeafa" stroke="#4f7fb8" />
        <rect x={7} y={8} width={12} height={11} fill="#eff5fd" stroke="#4f7fb8" />
        <path d="M3 5h6M9 13h7" stroke="#4f7fb8" />
      </svg>
      {MENU.map((m) => (
        <div key={m[0]} className={`${m[1]} text-[15px] text-black shrink-0`}>{m[0]}</div>
      ))}
      <MdiBox className="left-[1849px]"><path d="M2 8h5" stroke="#555" strokeWidth={2} /></MdiBox>
      <MdiBox className="left-[1874px]"><path d="M3.500 3V1.500h5v4H7M1.500 3.500h5v5h-5z" fill="none" stroke="#555" /></MdiBox>
      <MdiBox className="left-[1898px]"><path d="M1 2l6 6M7 2L1 8" stroke="#555" strokeWidth={1.800} /></MdiBox>
    </div>

    <ToolbarOne />
    <ToolbarTwo />
    <ChartPanel />

    <div className="h-[27px] shrink-0 bg-[#efefef] flex items-start text-[16px] text-[#777] relative border-t border-white">
      <div className="ml-[4px] w-px h-[26px] bg-[#999]" />
      <div className="ml-[16px] mt-[3px] w-[92px]">XAUUSD,M1</div>
      <div className="ml-[16px] mt-[3px] w-px h-[18px] bg-[#888]" />
      <div className="ml-[12px] mt-[3px] w-[107px]">XAUUSD,M1</div>
      <div className="w-[128px] h-[24px] border border-black border-r-2 border-b-2 border-b-black bg-white text-black flex items-center justify-center">XAUUSD,M15</div>
      <svg width={30} height={10} viewBox="0 0 30 10" className="absolute left-[1879px] top-[8px]">
        <path d="M5 1L1 5l4 4zM25 1l4 4-4 4z" fill="#999" />
      </svg>
    </div>

    <Terminal2 />

    <div className="h-[4px] bg-white shrink-0" />
    <div className="shrink-0 border-t-2 border-[#b0b0b0] h-[21px] bg-[#efefef] flex items-end overflow-hidden text-black text-[15px]">
      <div className="w-[948px] shrink-0 h-full overflow-hidden leading-[30px] whitespace-pre -ml-[2px] mt-[1px]">寻求帮助, 请按F1键</div>
      <div className="w-[156px] shrink-0 h-[16px] border-l border-[#888] pl-[7px] leading-[24px] overflow-hidden">Default</div>
      {STATUS_SEP.map((w, i) => (
        <div key={i} className={`${w} shrink-0 h-[16px] border-l border-[#888]`} />
      ))}
    </div>
    <div className="flex-1 bg-[#111] flex">
      <div className="ml-[710px] w-[196px] h-full bg-[#3c3a3c]" />
    </div>

    {/* input method bar */}
    <div className="absolute left-[1690px] top-[999px] w-[222px] h-[29px] bg-white flex items-center text-[#1f78c8] text-[20px]">
      <span className="ml-[8px] font-bold">中</span>
      <span className="ml-[6px] font-bold leading-none">°,</span>
      <svg width={22} height={24} viewBox="0 0 22 24" className="ml-[13px] block"><circle cx={11} cy={12} r={9} fill="none" stroke="#1f78c8" strokeWidth={2} /><path d="M7 9v2M15 9v2M6 15q5 4 10 0" stroke="#1f78c8" strokeWidth={1.6} fill="none" /></svg>
      <svg width={20} height={26} viewBox="0 0 20 26" className="ml-[7px] block"><rect x={6} y={1} width={8} height={15} rx={4} fill="#1f78c8" /><path d="M3 11q0 8 7 8t7-8M10 19v4M5 24h10" stroke="#1f78c8" strokeWidth={2} fill="none" /></svg>
      <svg width={22} height={18} viewBox="0 0 22 18" className="ml-[7px] block"><rect x={1} y={1} width={20} height={16} rx={2} fill="#1f78c8" /><path d="M4 5h14M4 8.500h14M7 12.500h8" stroke="#fff" strokeWidth={1.6} strokeDasharray="2 1" /></svg>
      <svg width={16} height={24} viewBox="0 0 16 24" className="ml-[7px] block"><circle cx={8} cy={5} r={4} fill="#c8ced6" /><path d="M2 22V13q6-4 12 0v9z" fill="#c8ced6" /></svg>
      <svg width={20} height={20} viewBox="0 0 20 20" className="ml-[9px] block"><path d="M6 1h8l5 5-3 3v10H4V9L1 6z" fill="#1f78c8" /></svg>
      <svg width={18} height={20} viewBox="0 0 18 20" className="ml-[7px] block"><path d="M1 1h7v8H1zM10 1h7v8h-7zM1 11h7v8H1zM10 11h7v8h-7z" fill="#1f78c8" /></svg>
    </div>
    <svg width={40} height={38} viewBox="0 0 40 38" className="absolute left-[1655px] top-[995px]">
      <path d="M2 8L33 2l6 28-31 6z" fill="#f05a1d" />
      <path d="M28 11q-9-3-11 2t6 6q6 2 3 6-3 3-11 0" fill="none" stroke="#fff" strokeWidth={4} />
    </svg>
    <div className="absolute left-[1841px] top-[1034px] w-[4px] h-[4px] rounded-full bg-[#ff1010]" />
    <svg width={20} height={22} viewBox="0 0 20 22" className="absolute left-[1840px] top-[1014px] opacity-90">
      <rect x={1} y={1} width={18} height={20} rx={4} fill="#ee9a85" />
      <ellipse cx={10} cy={12} rx={6} ry={5} fill="#fff" />
      <circle cx={8} cy={12} r={1} fill="#ee9a85" />
      <circle cx={12} cy={12} r={1} fill="#ee9a85" />
    </svg>
    <div className="absolute left-[1863px] top-[1017px] text-[13px] leading-[16px] font-bold text-[#f2a08a]">EAHub</div>
  </div>
);

export default App;
